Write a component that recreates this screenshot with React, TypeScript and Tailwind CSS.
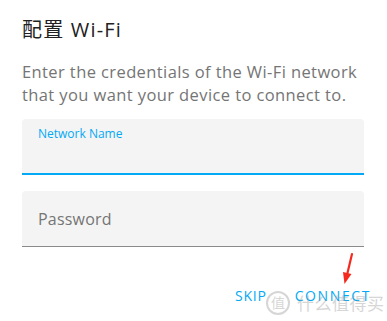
export default function App() {
  const font = { fontFamily: '"Open Sans", "Noto Sans CJK SC", sans-serif' };
  return (
    <div className="relative w-[387px] h-[321px] bg-white overflow-hidden" style={font}>
      <div className="pl-[22px] pr-[23px] pt-[17px]">
        <h1 className="text-[20px] leading-[26px] tracking-[1.2px] text-[#212121]">配置 Wi-Fi</h1>
        <p className="mt-[17px] text-[16.5px] leading-[23px] text-[#757575] tracking-[0.4px]">
          Enter the credentials of the Wi-Fi network that you want your device to connect to.
        </p>

        <div className="mt-[13px] flex flex-col gap-[16px]">
          <div className="h-[56px] rounded-t-[4px] bg-[#f4f4f4] border-b-2 border-[#03a9f4] px-[16px] pt-[7px]">
            <div className="text-[12px] leading-[16px] text-[#03a9f4]">Network Name</div>
          </div>
          <div className="h-[56px] rounded-t-[4px] bg-[#f4f4f4] border-b border-[#8a8a8a] px-[16px] flex items-center">
            <div className="text-[16px] tracking-[0.2px] text-[#757575]">Password</div>
          </div>
        </div>

        <div className="mt-[38px] mr-[-7px] flex justify-end gap-[28px] text-[14px] font-medium tracking-[1.6px] text-[#03a9f4]">
          <span className="tracking-[0.8px]">SKIP</span>
          <span>CONNECT</span>
        </div>
      </div>

      {/* red annotation arrow */}
      <svg className="absolute left-[336px] top-[251px]" width="24" height="36" viewBox="0 0 24 36">
        <path d="M16 3 L11 24" stroke="#f42a1e" strokeWidth="2.2" strokeLinecap="round" />
        <path d="M7 21 L8.5 33 L15.5 23 Z" fill="#f42a1e" />
      </svg>

      {/* watermark */}
      <div className="absolute left-[266px] top-[291px] flex items-center gap-[7px] text-[#9a9a9a] opacity-40">
        <span className="w-[24px] h-[24px] rounded-full border-2 border-[#9a9a9a] flex items-center justify-center text-[14px] leading-none">
          值
        </span>
        <span className="text-[17px] tracking-[0.5px] leading-none">什么值得买</span>
      </div>
    </div>
  );
}
